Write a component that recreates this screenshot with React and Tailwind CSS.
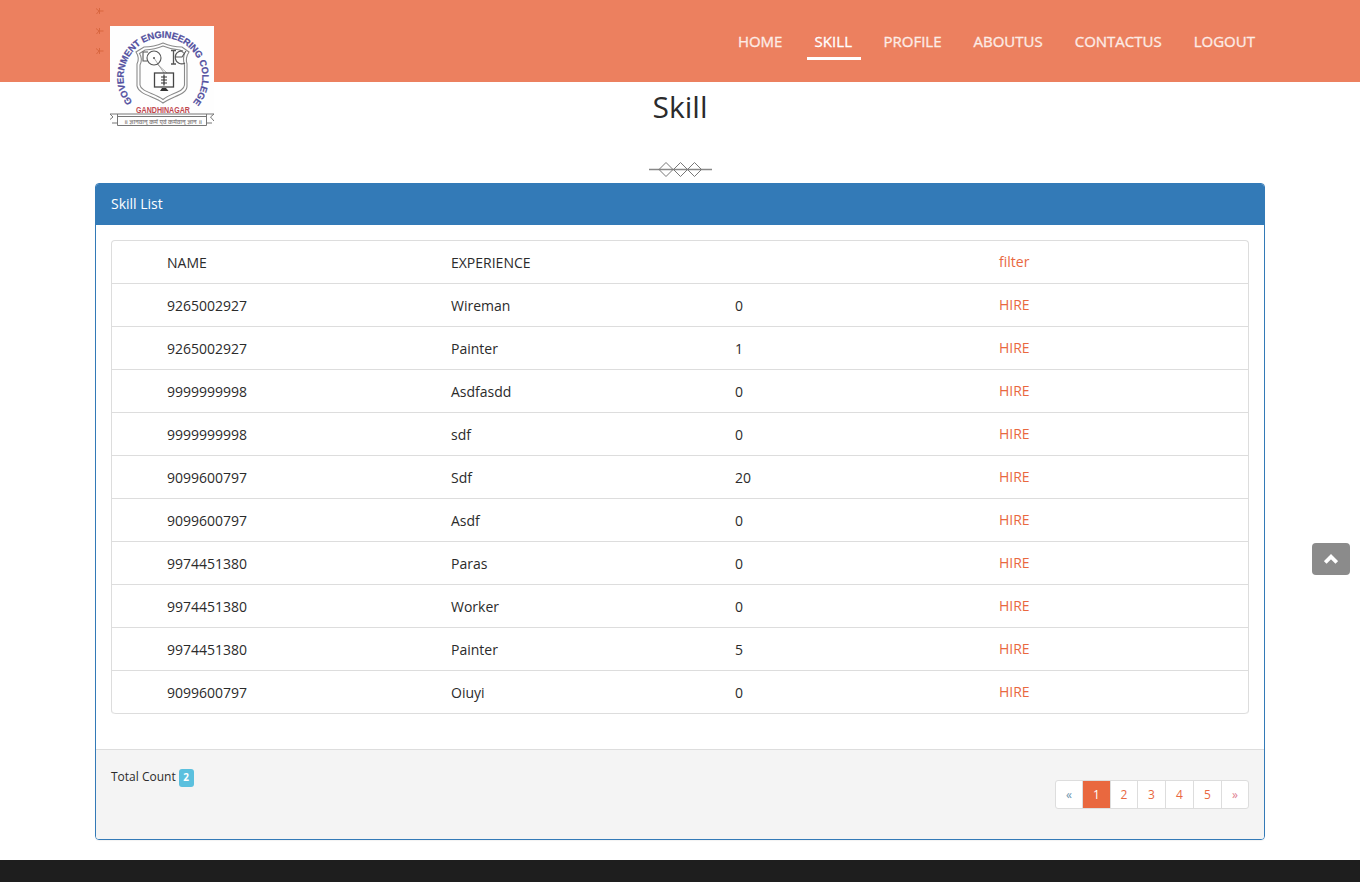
const nav = ["HOME", "SKILL", "PROFILE", "ABOUTUS", "CONTACTUS", "LOGOUT"];

const rows = [
  ["9265002927", "Wireman", "0"],
  ["9265002927", "Painter", "1"],
  ["9999999998", "Asdfasdd", "0"],
  ["9999999998", "sdf", "0"],
  ["9099600797", "Sdf", "20"],
  ["9099600797", "Asdf", "0"],
  ["9974451380", "Paras", "0"],
  ["9974451380", "Worker", "0"],
  ["9974451380", "Painter", "5"],
  ["9099600797", "Oiuyi", "0"],
];

function Logo() {
  return (
    <svg width="104" height="100" viewBox="0 0 104 100" className="block">
      <rect width="104" height="100" fill="#fefefe" />
      <defs>
        <path id="ring" d="M22.5 76A39.300 39.300 0 1 1 79 80.500" />
      </defs>
      <text fontFamily="Liberation Sans, sans-serif" fontWeight="700" fontSize="9.4" fill="#5351a0" stroke="#5351a0" strokeWidth=".2">
        <textPath href="#ring" textLength="178">GOVERNMENT ENGINEERING COLLEGE</textPath>
      </text>
      <g fill="none" stroke="#8a8a8a" strokeWidth="1.1">
        <path d="M34 21Q44 21 53 17Q62 21 72 21L79 26Q75 32 77 38V60C77 69 62 70 53 77C44 70 29 69 27 60V38Q30 32 26 26Z" />
        <path d="M35 24Q45 23.500 53 20Q61 23.500 70 24L74.500 27.500Q72.500 33 74.500 39V59C74 66 61 67 53 73.500C45 67 31 66 30 59V39Q33 33 29.500 27.500Z" />
        <path d="M44 32L54 47M47 38L57 47" strokeWidth=".7" />
      </g>
      <g fill="none" stroke="#555" strokeWidth="1.1">
        <circle cx="44" cy="32" r="7" />
        <path d="M38 26H33V35H37" />
        <path d="M61 24.500H66M61 38H66M63.500 25V38" strokeWidth="1.3" />
        <path d="M73 25A6.500 6.500 0 1 0 75 37M66 31H72L76 25" />
        <rect x="44.500" y="47" width="19" height="14" stroke="#444" strokeWidth="1.3" />
        <path d="M54 48.500V59.500M51 51H57M51 54H57M51 57H57" stroke="#333" strokeWidth="1.2" />
      </g>
      <circle cx="44" cy="32" r="1" fill="#555" />
      <path d="M52 62H56L58.500 65H50Z" fill="#333" />
      <text x="26" y="86.500" textLength="54" lengthAdjust="spacingAndGlyphs" fontFamily="Liberation Sans, sans-serif" fontWeight="700" fontSize="8.4" fill="#c0474f">GANDHINAGAR</text>
      <g fill="none" stroke="#777" strokeWidth="1">
        <path d="M0 88L3 91L0 93.500M8 97H2M96 97H102M104 88L100.500 91L104 95" />
        <path d="M0 88H104M7.500 88V99.500H96.500V88M8 90.500H96" />
      </g>
      <text x="14" y="97.500" textLength="78" lengthAdjust="spacingAndGlyphs" fontFamily="Noto Sans, sans-serif" fontSize="6" fontWeight="600" fill="#8a8585">॥ ज्ञानवान् कर्म एवं कर्मवान् ज्ञान ॥</text>
    </svg>
  );
}

function Tick() {
  return (
    <svg width="10" height="10" viewBox="0 0 10 10" className="block" fill="none" stroke="#d9663f" strokeWidth="1">
      <path d="M1 2.500L4 5L1.500 8M4 5H8.500M4.500 2V8" />
    </svg>
  );
}

function Header() {
  return (
    <header className="h-[82px] bg-[#ec805f]">
      <div className="mx-auto flex w-[1170px] items-start justify-between">
        <div className="relative h-[82px] w-[120px]">
          <div className="flex flex-col gap-[10px] pt-[6px]">
            <Tick />
            <Tick />
            <Tick />
          </div>
          <div className="absolute left-[15px] top-[26px]">
            <Logo />
          </div>
        </div>
        <nav className="flex gap-[18px] pr-[3px] pt-[26px] text-[15px] leading-[31px] [-webkit-text-stroke:0.3px]">
          {nav.map((n) => (
            <a
              key={n}
              className={
                n === "SKILL"
                  ? "-mr-[3px] h-[34px] w-[54px] border-b-[3px] border-white pl-[7px] tracking-[0.1px] text-white"
                  : "h-[34px] px-[7px] text-white/80"
              }
            >
              {n}
            </a>
          ))}
        </nav>
      </div>
    </header>
  );
}

function Row({ cells, link }) {
  return (
    <li className="grid h-[43px] grid-cols-[284px_284px_264px_1fr] border-b border-[#ddd] pl-[55px] leading-[20px] last:rounded-b">
      <span className="pt-[12px]">{cells[0]}</span>
      <span className="pt-[12px]">{cells[1]}</span>
      <span className="pt-[12px]">{cells[2]}</span>
      <a className="pt-[11px] text-[#e9683f]">{link}</a>
    </li>
  );
}

export default function App() {
  return (
    <div className="flex h-[882px] flex-col overflow-hidden bg-white font-['Open_Sans',sans-serif] text-[14px] text-[#2b2b2b]">
      <Header />
      <div className="flex h-[101px] flex-col items-center">
        <h1 className="pt-[8px] text-[30px] leading-[33px]">Skill</h1>
        <svg width="63" height="15" viewBox="0 0 63 15" className="mt-[39px]" fill="none" stroke="#777" strokeWidth="1">
          <path d="M0 7.500H63" stroke="#888" strokeWidth="1.300" />
          <path d="M10 7.500L17 .5L24 7.500L17 14.500ZM24.500 7.500L31.500 .5L38.500 7.500L31.500 14.500ZM38.500 7.500L45.500 .5L52.500 7.500L45.500 14.500Z" />
        </svg>
      </div>
      <main className="mx-auto flex h-[657px] w-[1170px] flex-col overflow-hidden rounded border border-[#337ab7] shadow-[0_1px_1px_rgba(0,0,0,.05)]">
        <h2 className="h-[41px] bg-[#337ab7] px-[15px] leading-[40px] text-white">Skill List</h2>
        <div className="h-[524px] p-[15px]">
          <ul className="rounded border-x border-t border-[#ddd]">
            <Row cells={["NAME", "EXPERIENCE", ""]} link="filter" />
            {rows.map((r, i) => (
              <Row key={i} cells={r} link="HIRE" />
            ))}
          </ul>
        </div>
        <footer className="flex flex-1 items-start justify-between border-t border-[#ddd] bg-[#f4f4f4] px-[15px] text-[12px]">
          <div className="flex items-start gap-[3px] pt-[18px]">
            <span className="leading-[18px]">Total Count</span>
            <span className="mt-px h-[18px] w-[15px] rounded-[3px] bg-[#5bc0de] text-center text-[10px] font-bold leading-[17px] text-white">2</span>
          </div>
          <div className="mt-[30px] flex h-[29px] overflow-hidden rounded-[3px] border border-[#ddd] bg-white text-center leading-[27px] text-[#e9683f]">
            <a className="w-[26px] text-[#6b93ad]">«</a>
            <a className="w-[28px] border-l border-[#ddd] bg-[#e9683f] text-white">1</a>
            <a className="w-[27px] border-l border-[#ddd]">2</a>
            <a className="w-[28px] border-l border-[#ddd]">3</a>
            <a className="w-[28px] border-l border-[#ddd]">4</a>
            <a className="w-[28px] border-l border-[#ddd]">5</a>
            <a className="w-[27px] border-l border-[#ddd] text-[#e08090]">»</a>
          </div>
        </footer>
      </main>
      <div className="mt-auto h-[22px] bg-[#1e1e1e]" />
      <button className="fixed right-[10px] top-[543px] flex h-[32px] w-[38px] items-center justify-center rounded bg-[#8b8b8b] pr-px">
        <svg width="14" height="10" viewBox="0 0 14 10" fill="none" stroke="white" strokeWidth="3.800">
          <path d="M1.200 8.500L7 2.700L12.800 8.500" />
        </svg>
      </button>
    </div>
  );
}
